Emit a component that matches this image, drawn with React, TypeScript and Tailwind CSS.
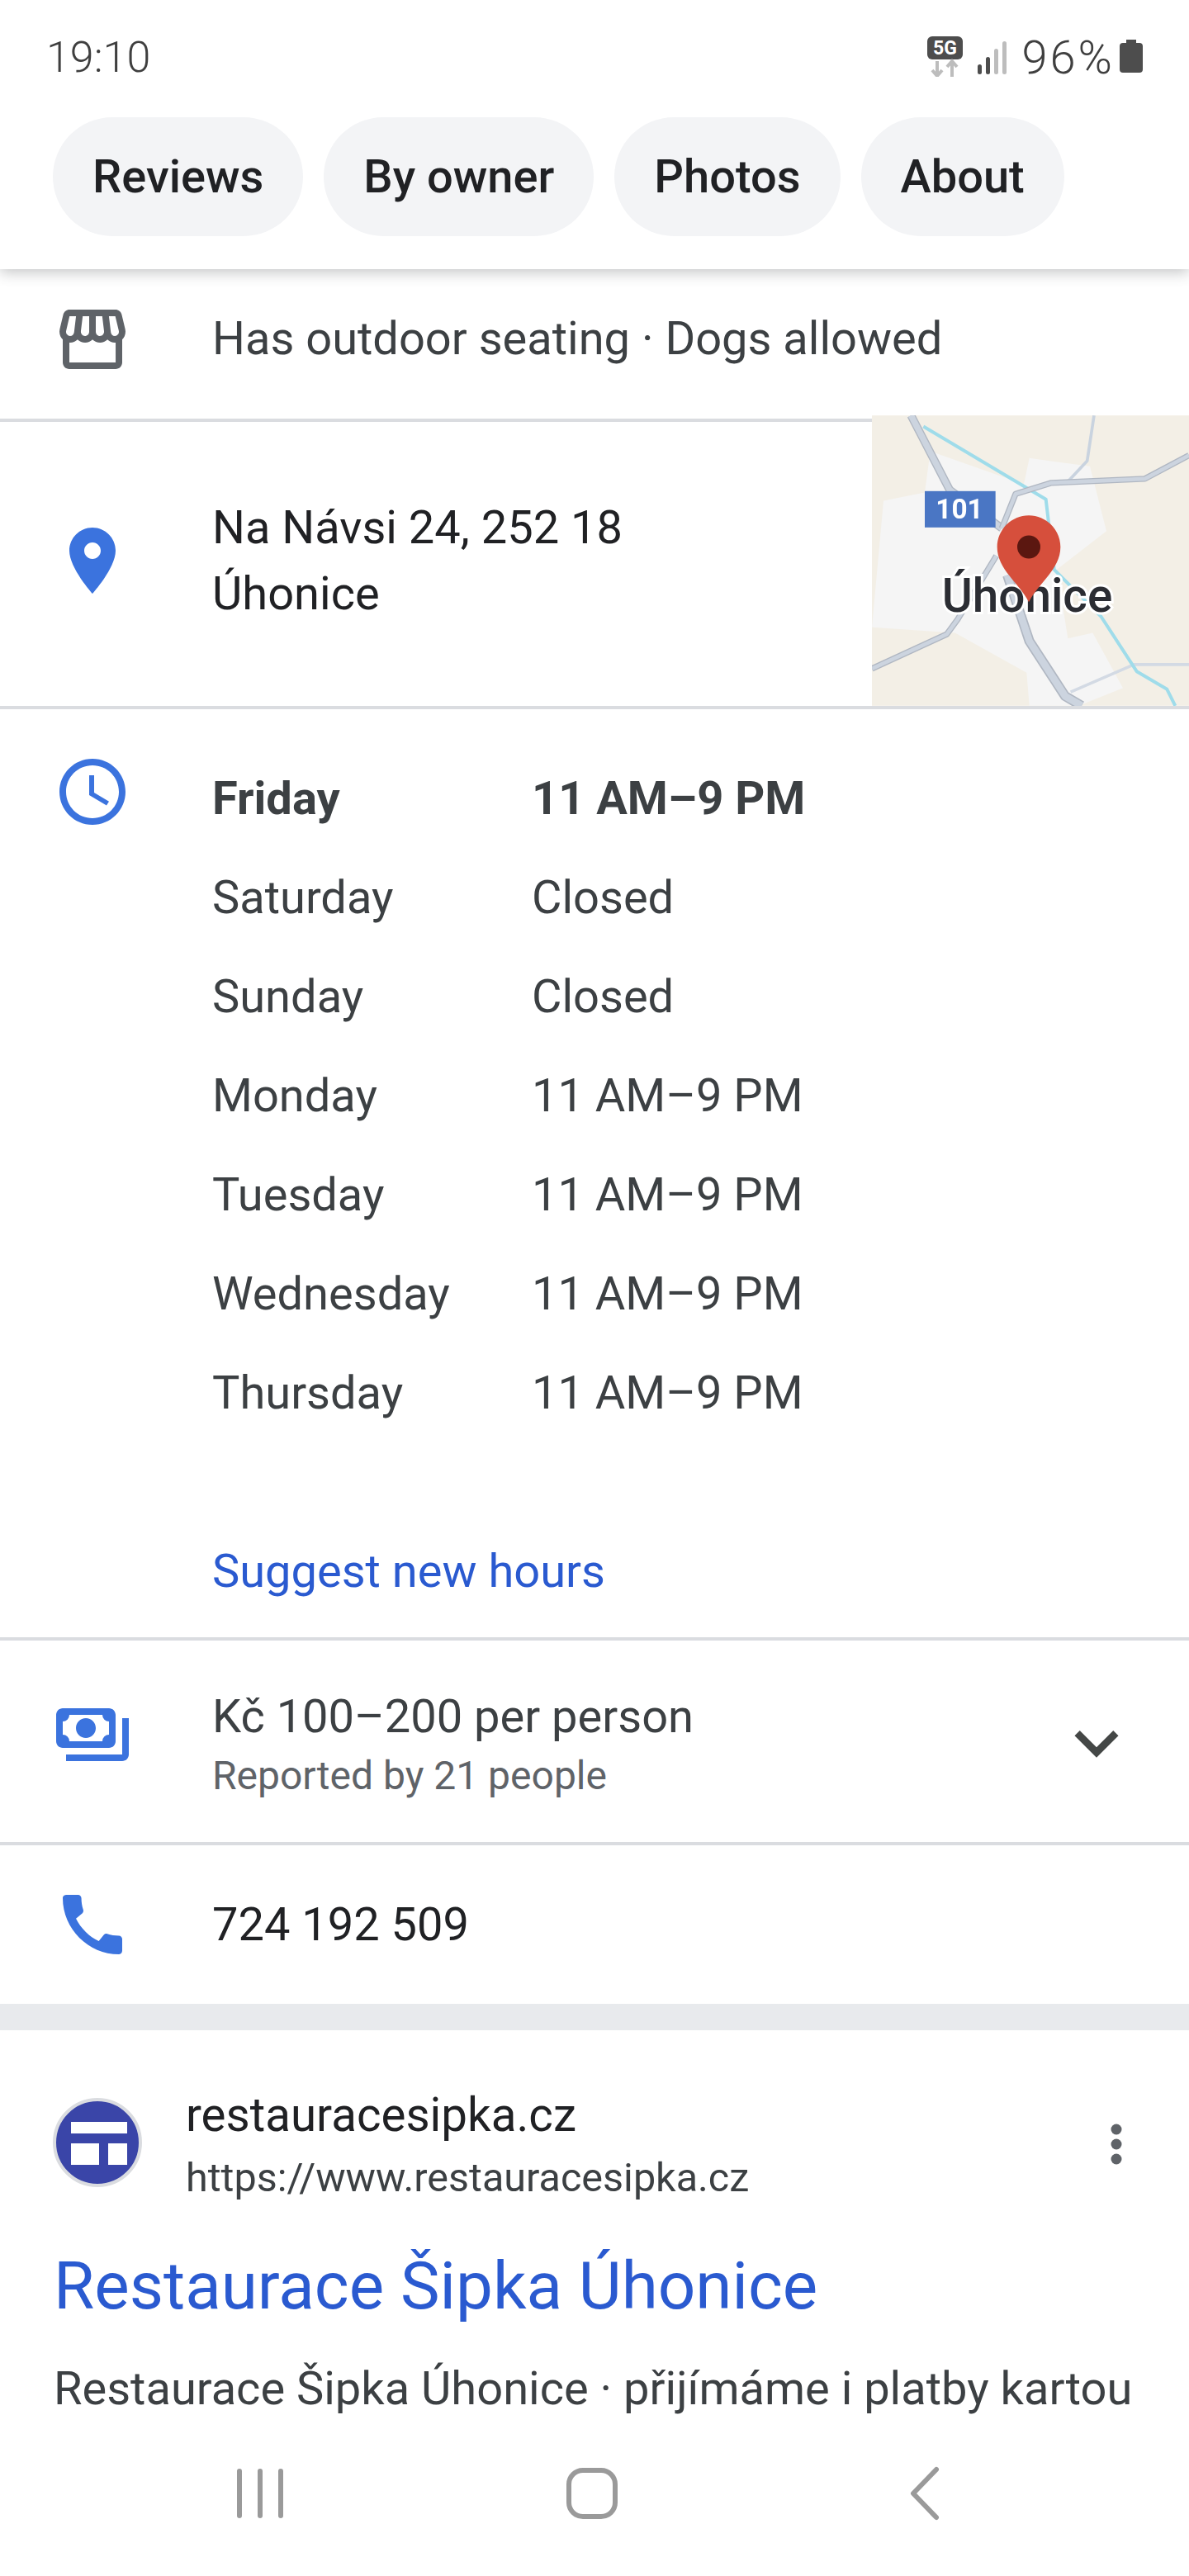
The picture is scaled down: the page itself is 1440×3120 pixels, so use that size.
import React from "react";

function MIcon({ d, color, className }: { d: string; color: string; className?: string }) {
  return (
    <svg viewBox="0 0 24 24" className={className ?? "w-24 h-24 shrink-0"} fill={color}>
      <path d={d} />
    </svg>
  );
}

const store =
  "M21.9 8.89l-1.05-4.37c-.22-.9-1-1.52-1.91-1.52H5.05c-.9 0-1.69.63-1.9 1.52L2.1 8.89c-.24 1.02-.02 2.06.62 2.88.08.11.19.19.28.29V19c0 1.1.9 2 2 2h14c1.1 0 2-.9 2-2v-6.94c.09-.09.2-.18.28-.28.64-.82.87-1.87.62-2.89zm-2.99-3.9l1.05 4.37c.1.42.01.84-.25 1.17-.14.18-.44.47-.94.47-.61 0-1.14-.49-1.21-1.14L16.98 5l1.93-.01zM13 5h1.96l.54 4.52c.05.39-.07.78-.33 1.07-.22.26-.54.41-.95.41-.67 0-1.22-.59-1.22-1.31V5zM8.49 9.52L9.04 5H11v4.69c0 .72-.55 1.31-1.29 1.31-.34 0-.65-.15-.89-.41-.25-.29-.37-.68-.33-1.07zm-4.45-.16L5.05 5h1.97l-.58 4.86c-.08.65-.6 1.14-1.21 1.14-.49 0-.8-.29-.93-.47-.27-.32-.36-.75-.26-1.17zM5 19v-6.03c.08.01.15.03.23.03.87 0 1.66-.36 2.24-.95.6.6 1.4.95 2.31.95.87 0 1.65-.36 2.23-.93.59.57 1.39.93 2.29.93.84 0 1.64-.35 2.24-.95.58.59 1.37.95 2.24.95.08 0 .15-.02.23-.03V19H5z";
const place =
  "M12 2C8.13 2 5 5.13 5 9c0 5.25 7 13 7 13s7-7.75 7-13c0-3.87-3.13-7-7-7zm0 9.5c-1.38 0-2.5-1.12-2.5-2.5s1.12-2.5 2.5-2.5 2.5 1.12 2.5 2.5-1.12 2.5-2.5 2.5z";
const clock =
  "M11.99 2C6.47 2 2 6.48 2 12s4.47 10 9.99 10C17.52 22 22 17.52 22 12S17.52 2 11.99 2zM12 20c-4.42 0-8-3.58-8-8s3.58-8 8-8 8 3.58 8 8-3.58 8-8 8zm.5-13H11v6l5.25 3.15.75-1.23-4.5-2.67V7z";
const money =
  "M19 14V6c0-1.1-.9-2-2-2H3c-1.1 0-2 .9-2 2v8c0 1.1.9 2 2 2h14c1.1 0 2-.9 2-2zM3 8a2 2 0 0 0 2-2h10a2 2 0 0 0 2 2v4a2 2 0 0 0-2 2H5a2 2 0 0 0-2-2V8zm7 5c1.66 0 3-1.34 3-3s-1.34-3-3-3-3 1.34-3 3 1.34 3 3 3zM23 7v11c0 1.1-.9 2-2 2H4v-2h17V7h2z";
const phone =
  "M20.01 15.38c-1.23 0-2.42-.2-3.53-.56-.35-.12-.74-.03-1.01.24l-1.57 1.97c-2.83-1.35-5.48-3.9-6.89-6.83l1.95-1.66c.27-.28.35-.67.24-1.02-.37-1.11-.56-2.3-.56-3.53 0-.54-.45-.99-.99-.99H4.19C3.65 3 3 3.24 3 3.99 3 13.28 10.73 21 20.01 21c.71 0 .99-.63.99-1.18v-3.45c0-.54-.45-.99-.99-.99z";
const expand = "M16.59 8.59L12 13.17 7.41 8.59 6 10l6 6 6-6z";

const BLUE = "#3b73de";

function Chip({ label }: { label: string }) {
  return (
    <div className="h-[144px] flex items-center px-[48px] rounded-[72px] bg-[#f3f4f6] text-[56px] font-medium text-[#202124]">
      {label}
    </div>
  );
}

function Hr() {
  return <div className="h-1 bg-[#dadce0] shrink-0" />;
}

function Map() {
  return (
    <svg viewBox="48 40 1152 1055" className="w-[384px] h-[352px] -mt-2 shrink-0">
      <rect x="48" y="40" width="1152" height="1055" fill="#f3efe6" />
      <g className="blur-[0.6px]">
        <path
          d="M260 170 L600 290 L620 195 L840 225 L900 460 L720 600 L760 850 L850 830 L960 1030 L800 1095 L620 1095 L610 975 L350 830 L48 810 L90 350 L240 320 Z"
          fill="#f5f5f5"
        />
        <g fill="none" strokeLinejoin="round">
          <path d="M855 40 L830 205 L760 280" stroke="#c9d3df" strokeWidth="11" />
          <path d="M770 1045 L1000 945 L1200 945" stroke="#d3dae4" strokeWidth="11" />
          <path d="M235 80 L680 345 L710 600 L880 770 L1010 970 L1120 1035 L1150 1095" stroke="#9fdcea" strokeWidth="12" />
          <path d="M190 40 L330 310 L520 450" stroke="#b0b7c2" strokeWidth="30" />
          <path d="M190 40 L330 310 L520 450" stroke="#ccd4df" strokeWidth="22" />
          <path d="M48 960 L320 835 L360 780 L500 550 M520 450 L570 325 L700 285 L1040 270 L1200 185" stroke="#b0b7c2" strokeWidth="22" />
          <path d="M48 960 L320 835 L360 780 L500 550 M520 450 L570 325 L700 285 L1040 270 L1200 185" stroke="#ccd4df" strokeWidth="14" />
          <path d="M540 620 L620 860 L750 1060 L810 1095" stroke="#b0b7c2" strokeWidth="36" />
          <path d="M540 620 L620 860 L750 1060 L810 1095" stroke="#ccd4df" strokeWidth="26" />
        </g>
        <rect x="240" y="315" width="257" height="132" fill="#4a76c4" />
        <text x="366" y="415" textAnchor="middle" fill="#fff" fontSize="100" fontWeight="700" fontFamily="Roboto, sans-serif">101</text>
        <text x="612" y="755" textAnchor="middle" fill="#2b2d33" stroke="#fff" strokeWidth="18" paintOrder="stroke" fontSize="170" fontWeight="500" fontFamily="Roboto, sans-serif">Úhonice</text>
        <path d="M618 403 C555 403 503 455 503 518 C503 600 585 650 618 718 C651 650 733 600 733 518 C733 455 681 403 618 403 Z" fill="#d64f3c" />
        <circle cx="618" cy="518" r="42" fill="#5b1710" />
      </g>
    </svg>
  );
}

function Hours({ day, time, bold }: { day: string; time: string; bold?: boolean }) {
  return (
    <div className={"h-[120px] flex items-center " + (bold ? "font-bold" : "")}>
      <div className="w-[387px]">{day}</div>
      <div>{time}</div>
    </div>
  );
}

export default function App() {
  return (
    <div className="w-[1440px] h-[3120px] bg-white overflow-hidden flex flex-col font-[Roboto,sans-serif] text-[56px] leading-[80px] text-[#3c4043]">
      <header className="h-[326px] shrink-0 bg-white relative z-10 shadow-[0_4px_16px_rgba(60,64,67,0.3)]">
        <div className="h-[142px] flex items-start justify-between pl-[56px] pr-[56px] pt-[28px]">
          <span className="text-[52px] leading-[80px] font-light text-[#3f3f3f] mt-[2px]">19:10</span>
          <div className="flex items-center h-[80px]">
            <svg viewBox="0 0 43 49" className="w-[43px] h-[49px]">
              <rect x="0" y="0" width="43" height="28" rx="6" fill="#4d4d4d" />
              <text x="21.5" y="22" textAnchor="middle" fill="#fff" fontSize="23" fontWeight="700" fontFamily="Roboto, sans-serif">5G</text>
              <path d="M12 30V47M6 41L12 48L18 41" stroke="#bdbdbd" strokeWidth="4" fill="none" />
              <path d="M30 49V31M24 37L30 30L36 37" stroke="#bdbdbd" strokeWidth="4" fill="none" />
            </svg>
            <svg viewBox="0 0 35 40" className="w-[35px] h-[40px] ml-[18px] mt-[4px]">
              <rect x="0" y="28" width="5" height="12" rx="2.5" fill="#4d4d4d" />
              <rect x="10" y="19" width="5" height="21" rx="2.5" fill="#4d4d4d" />
              <rect x="20" y="9" width="5" height="31" rx="2.5" fill="#bdbdbd" />
              <rect x="30" y="0" width="5" height="40" rx="2.5" fill="#bdbdbd" />
            </svg>
            <span className="ml-[18px] mt-[4px] text-[56px] tracking-[3px] font-light text-[#3f3f3f]">96%</span>
            <svg viewBox="0 0 28 40" className="w-[28px] h-[40px] ml-[6px]">
              <path d="M8 0h12v4h4a4 4 0 0 1 4 4v28a4 4 0 0 1-4 4H4a4 4 0 0 1-4-4V8a4 4 0 0 1 4-4h4z" fill="#4d4d4d" />
            </svg>
          </div>
        </div>
        <div className="flex gap-[25px] pl-[64px]">
          <Chip label="Reviews" />
          <Chip label="By owner" />
          <Chip label="Photos" />
          <Chip label="About" />
        </div>
      </header>

      <main className="flex-1 min-h-0 overflow-hidden flex flex-col">
        <section className="h-[181px] shrink-0 flex pt-[37px] pl-[64px]">
          <MIcon d={store} color="#5f6368" />
          <div className="ml-[97px] -mt-[1px] h-[96px] flex items-center">Has outdoor seating · Dogs allowed</div>
        </section>
        <Hr />
        <section className="h-[344px] shrink-0 flex pl-[64px]">
          <MIcon d={place} color={BLUE} className="w-24 h-24 shrink-0 mt-[120px]" />
          <div className="ml-[97px] pt-[88px] text-[#202124] flex-1">
            <div>Na Návsi 24, 252 18</div>
            <div>Úhonice</div>
          </div>
          <Map />
        </section>
        <Hr />
        <section className="h-[1124px] shrink-0 flex pl-[64px]">
          <MIcon d={clock} color={BLUE} className="w-24 h-24 shrink-0 mt-[52px]" />
          <div className="ml-[97px] pt-[48px]">
            <Hours day="Friday" time="11 AM–9 PM" bold />
            <Hours day="Saturday" time="Closed" />
            <Hours day="Sunday" time="Closed" />
            <Hours day="Monday" time="11 AM–9 PM" />
            <Hours day="Tuesday" time="11 AM–9 PM" />
            <Hours day="Wednesday" time="11 AM–9 PM" />
            <Hours day="Thursday" time="11 AM–9 PM" />
            <div className="mt-[116px] text-[#2a5ad0]">Suggest new hours</div>
          </div>
        </section>
        <Hr />
        <section className="h-[244px] shrink-0 flex pl-[64px]">
          <MIcon d={money} color={BLUE} className="w-24 h-24 shrink-0 mt-[66px]" />
          <div className="ml-[97px] pt-[52px] flex-1">
            <div>Kč 100–200 per person</div>
            <div className="text-[48px] leading-[60px] mt-[2px] text-[#5f6368]">Reported by 21 people</div>
          </div>
          <MIcon d={expand} color="#444746" className="w-[106px] h-[106px] shrink-0 mt-[71px] mr-[59px]" />
        </section>
        <Hr />
        <section className="h-[192px] shrink-0 flex pl-[64px]">
          <MIcon d={phone} color={BLUE} className="w-24 h-24 shrink-0 mt-[48px]" />
          <div className="ml-[97px] pt-[56px] text-[#202124]">724 192 509</div>
        </section>
        <div className="h-[32px] shrink-0 bg-[#e8eaed]" />
        <section className="flex-1 min-h-0 pl-[65px] pr-[60px] pt-[83px]">
          <div className="flex items-center h-[106px] -ml-[1px]">
            <svg viewBox="0 0 108 108" className="w-[108px] h-[108px] shrink-0">
              <circle cx="54" cy="54" r="52" fill="#3a45a8" stroke="#dadce0" strokeWidth="4" />
              <rect x="22" y="29" width="68" height="14" fill="#fff" />
              <rect x="22" y="55" width="34" height="26" fill="#fff" />
              <rect x="67" y="55" width="23" height="26" fill="#fff" />
            </svg>
            <div className="ml-[53px] flex-1 mt-[10px]">
              <div className="text-[#202124] text-[56.5px] leading-[76px]">restauracesipka.cz</div>
              <div className="text-[#3c4043] text-[48.5px] leading-[76px]">https://www.restauracesipka.cz</div>
            </div>
            <svg viewBox="0 0 14 50" className="w-[14px] h-[50px] shrink-0 mr-[21px] mt-[4px]">
              <circle cx="7" cy="7" r="6.5" fill="#5f6368" />
              <circle cx="7" cy="25" r="6.5" fill="#5f6368" />
              <circle cx="7" cy="43" r="6.5" fill="#5f6368" />
            </svg>
          </div>
          <div className="mt-[71px] text-[80px] leading-[100px] text-[#2a5ad0] whitespace-nowrap">Restaurace Šipka Úhonice</div>
          <div className="mt-[36px] text-[56px] leading-[76px] text-[#3c4043] whitespace-nowrap">Restaurace Šipka Úhonice · přijímáme i platby kartou</div>
        </section>
      </main>

      <nav className="h-[170px] shrink-0 bg-white relative">
        <svg viewBox="0 0 1440 170" className="w-[1440px] h-[170px]">
          <g stroke="#9a9a9a" strokeWidth="6" fill="none" strokeLinecap="round">
            <path d="M290 43V97M315 43V97M340 43V97" />
            <rect x="689" y="42" width="56" height="56" rx="17" />
            <path d="M1134 41L1106 70L1134 99" strokeLinejoin="round" />
          </g>
        </svg>
      </nav>
    </div>
  );
}
